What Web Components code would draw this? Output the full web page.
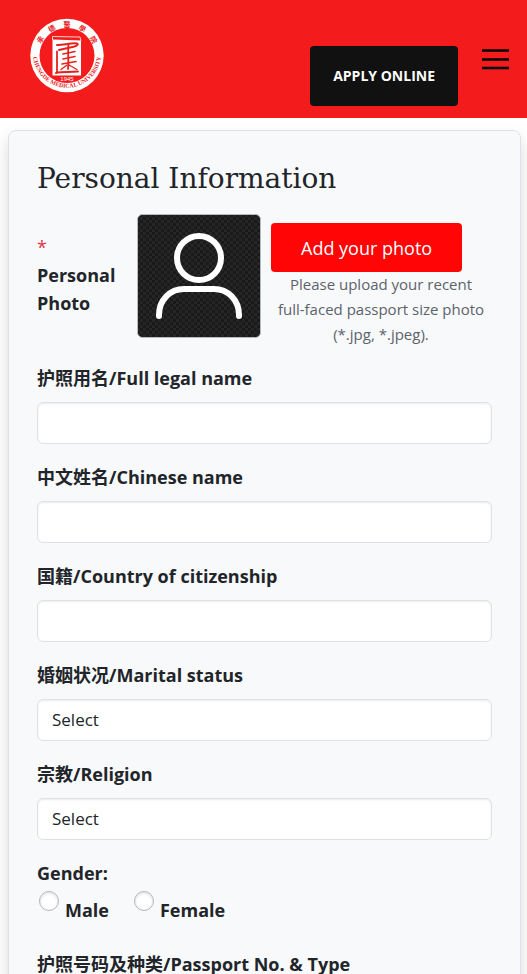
<!DOCTYPE html>
<html lang="en">
<head>
<meta charset="utf-8">
<meta name="viewport" content="width=device-width, initial-scale=1">
<title>Personal Information</title>
<style>
  body {
    margin: 0;
    height: 100vh;
    overflow: hidden;
    background: #fff;
    color: #212529;
    font-family: "Open Sans", "Noto Sans CJK SC", sans-serif;
    font-size: 18px;
    line-height: 28px;
  }
  main {
    padding: 12px 6px 12px 8px;
  }
  .nowrap {
    white-space: nowrap;
  }
</style>
</head>
<body>
<site-header>
  <apply-button>APPLY ONLINE</apply-button>
</site-header>
<main>
  <form-card heading="Personal Information">
    <photo-upload label="Personal Photo" button="Add your photo">Please upload your recent <span class="nowrap">full-faced</span> passport size photo (*.jpg, *.jpeg).</photo-upload>
    <text-field label="护照用名/Full legal name"></text-field>
    <text-field label="中文姓名/Chinese name"></text-field>
    <text-field label="国籍/Country of citizenship"></text-field>
    <select-field label="婚姻状况/Marital status"></select-field>
    <select-field label="宗教/Religion"></select-field>
    <radio-group label="Gender:" options="Male,Female"></radio-group>
    <text-field label="护照号码及种类/Passport No. &amp; Type"></text-field>
  </form-card>
</main>

<script>
// Shared by the text and select fields
const fieldStyles = `
  :host {
    display: block;
    margin-bottom: 19px;
  }
  label {
    display: block;
    margin-bottom: 10px;
    font-weight: 700;
  }
  input, select {
    display: block;
    box-sizing: border-box;
    width: 100%;
    height: 42px;
    margin: 0;
    padding: 0 14px;
    border: 1px solid #dee2e6;
    border-radius: 6px;
    background: #fff;
    box-shadow: inset 0 1px 2px rgba(0, 0, 0, .08);
    color: #212529;
    font: inherit;
    font-size: 17px;
    appearance: none;
  }
`;

function render(element, html) {
  element.attachShadow({ mode: "open" });
  const template = document.createElement("template");
  template.innerHTML = html;
  element.shadowRoot.appendChild(template.content.cloneNode(true));
}

class SiteLogo extends HTMLElement {
  constructor() {
    super();
    // One character every 30 degrees round the top of the seal
    const name = [..."承德醫學院"].map((char, i) => `
      <text class="name" x="37" y="9" transform="rotate(${(i - 2) * 30} 37 37)">${char}</text>
    `).join("");
    render(this, `
      <style>
        :host { display: block; width: 74px; height: 75px; }
        svg { display: block; }
        text { text-anchor: middle; fill: #e8201c; }
        .name { font: 700 7px "Noto Sans CJK TC", sans-serif; }
        .latin { font: 700 6px "Liberation Serif", serif; }
        .year { font: 6px "Liberation Sans", sans-serif; fill: #fff; }
      </style>
      <svg width="74" height="75" viewBox="0 0 74 75" role="img" aria-label="Chengde Medical University">
        <defs>
          <path id="rim" d="M3.200 32A34 34 0 1 0 70.800 32"/>
        </defs>
        <circle cx="37" cy="37.500" r="36.700" fill="#fff"/>
        <circle cx="37" cy="37.500" r="27.500" fill="#f31b1b"/>
        ${name}
        <text class="latin"><textPath href="#rim" startOffset="50%">CHENGDE MEDICAL UNIVERSITY</textPath></text>
        <path d="M22.500 22v-3.500L50 19l1 4" fill="none" stroke="#fff" stroke-width=".8"/>
        <path d="M22.500 21.500L51 22.500V57.500H22.500z" fill="#fff"/>
        <g fill="none" stroke="#e8201c" stroke-linecap="round" stroke-linejoin="round">
          <path stroke-width="2" d="M27 27c4 .8 15-2.500 20-1.500 2 .8-.5 2.500-3.500 3.300L29 32"/>
          <path stroke-width="1.800" d="M38.500 26c-1 8 .5 18-.5 25"/>
          <path stroke-width="1.800" d="M27 33.500v20.500"/>
          <path stroke-width="1.600" d="M33 36l12-2.500M33 41l12-2.500M32 46l14-2.500"/>
          <path stroke-width="1.400" d="M31 51.500l6-4.500M39 47l8 4.500"/>
          <path stroke-width="2" d="M26 55c6-1.500 13-.5 22-1.500"/>
        </g>
        <text class="year" x="37" y="63">1945</text>
      </svg>
    `);
  }
}

class SiteHeader extends HTMLElement {
  constructor() {
    super();
    render(this, `
      <style>
        :host {
          display: flex;
          align-items: flex-start;
          padding: 18px 18px 12px 30px;
          background: #f31b1b;
        }
        slot { display: block; margin: 28px 24px 0 auto; }
        .menu {
          width: 27px;
          height: 21px;
          margin: 31px 0 0;
          padding: 0;
          border: 0;
          background: none;
        }
        svg { display: block; }
      </style>
      <site-logo></site-logo>
      <slot></slot>
      <button class="menu" type="button" aria-label="Menu">
        <svg width="27" height="21" viewBox="0 0 27 21" stroke="#000" stroke-width="2.500"><path d="M0 1.500h27M0 10.500h27M0 19h27"/></svg>
      </button>
    `);
  }
}

class ApplyButton extends HTMLElement {
  constructor() {
    super();
    render(this, `
      <style>
        :host { display: block; }
        button {
          display: block;
          height: 60px;
          padding: 0 23px;
          border: 0;
          border-radius: 4px;
          background: #111;
          color: #fff;
          font: inherit;
          font-size: 14px;
          font-weight: 700;
        }
      </style>
      <button type="button"><slot></slot></button>
    `);
  }
}

class FormCard extends HTMLElement {
  constructor() {
    super();
    render(this, `
      <style>
        :host {
          display: block;
          padding: 30px 28px;
          border: 1px solid #dee2e6;
          border-radius: 8px;
          background: #f8f9fb;
          box-shadow: 0 8px 16px rgba(0, 0, 0, .15);
        }
        h2 {
          margin: 0 0 17px;
          font-family: "DejaVu Serif", serif;
          font-size: 28px;
          font-weight: 400;
          line-height: 36px;
        }
      </style>
      <h2>${this.getAttribute("heading")}</h2>
      <slot></slot>
    `);
  }
}

class PhotoUpload extends HTMLElement {
  constructor() {
    super();
    render(this, `
      <style>
        :host {
          display: grid;
          grid-template-columns: 90px 124px 1fr;
          column-gap: 10px;
          align-items: start;
          margin-bottom: 17px;
        }
        .label { padding-top: 19px; font-weight: 700; }
        .star { display: block; color: #dc3545; font-weight: 400; }
        .avatar { display: block; width: 124px; height: 124px; }
        .upload { padding-top: 9px; }
        button {
          display: block;
          height: 49px;
          padding: 0 30px;
          border: 0;
          border-radius: 4px;
          background: #ff0505;
          color: #fff;
          font: inherit;
        }
        p {
          margin: 0;
          max-width: 220px;
          color: #5c636a;
          font-size: 15px;
          line-height: 25px;
          text-align: center;
        }
      </style>
      <div class="label"><span class="star">*</span>${this.getAttribute("label")}</div>
      <svg class="avatar" viewBox="0 0 124 124" fill="none">
        <defs>
          <pattern id="weave" width="6" height="6" patternUnits="userSpaceOnUse">
            <path fill="#1a1a1a" d="M0 0h6v6H0z"/><path fill="#262626" d="M0 0h3v3H0zM3 3h3v3H3z"/>
          </pattern>
        </defs>
        <rect x=".5" y=".5" width="123" height="123" rx="5" fill="url(#weave)" stroke="#b8babc"/>
        <g stroke="#fff" stroke-width="6">
          <circle cx="62" cy="44" r="22"/>
          <path stroke-linecap="round" d="M22 102v-1C22 86 33 75 47 75h30c14 0 25 11 25 26v1"/>
        </g>
      </svg>
      <div class="upload">
        <button type="button">${this.getAttribute("button")}</button>
        <p><slot></slot></p>
      </div>
    `);
  }
}

class TextField extends HTMLElement {
  constructor() {
    super();
    render(this, `
      <style>${fieldStyles}</style>
      <label for="control">${this.getAttribute("label").replace("&", "&amp;")}</label>
      <input id="control" type="text">
    `);
  }
}

class SelectField extends HTMLElement {
  constructor() {
    super();
    render(this, `
      <style>${fieldStyles}</style>
      <label for="control">${this.getAttribute("label")}</label>
      <select id="control"><option>Select</option></select>
    `);
  }
}

class RadioGroup extends HTMLElement {
  constructor() {
    super();
    const options = this.getAttribute("options").split(",").map((name) => `
      <label><input type="radio" name="option" value="${name}"><span>${name}</span></label>
    `).join("");
    render(this, `
      <style>
        :host { display: block; margin-bottom: 26px; font-weight: 700; }
        fieldset { margin: 0; padding: 0; border: 0; }
        legend { padding: 0; }
        .options { display: flex; gap: 25px; padding-left: 2px; }
        label { display: flex; gap: 6px; align-items: flex-start; }
        span { padding-top: 9px; }
        input {
          width: 20px;
          height: 20px;
          margin: 4px 0 0;
          border: 1px solid #b5b7ba;
          border-radius: 50%;
          background: #fff;
          box-shadow: inset 0 1px 3px rgba(0, 0, 0, .15);
          appearance: none;
        }
        input:checked { background: #f31b1b; }
      </style>
      <fieldset>
        <legend>${this.getAttribute("label")}</legend>
        <div class="options">${options}</div>
      </fieldset>
    `);
  }
}

customElements.define("site-logo", SiteLogo);
customElements.define("site-header", SiteHeader);
customElements.define("apply-button", ApplyButton);
customElements.define("form-card", FormCard);
customElements.define("photo-upload", PhotoUpload);
customElements.define("text-field", TextField);
customElements.define("select-field", SelectField);
customElements.define("radio-group", RadioGroup);
</script>
</body>
</html>
